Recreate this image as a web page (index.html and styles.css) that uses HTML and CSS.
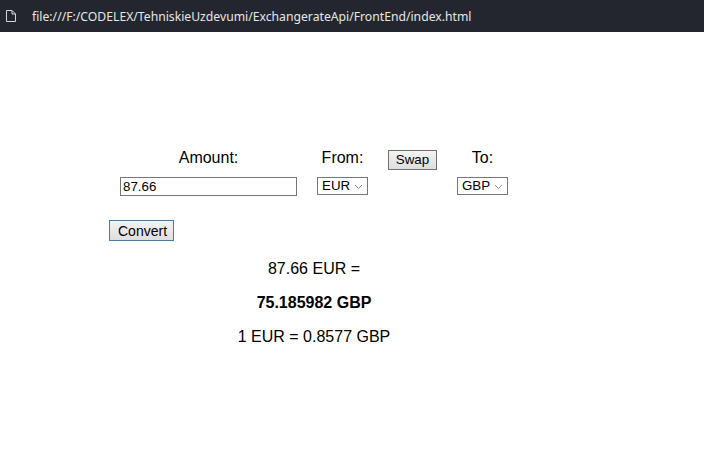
FILE: index.html
```html
<!DOCTYPE html>
<html lang="en">
<head>
<meta charset="utf-8">
<title>Exchange rate</title>
<link rel="stylesheet" href="styles.css">
</head>
<body>
<header class="topbar">
  <svg class="file-icon" width="12" height="14" viewBox="0 0 12 14" aria-hidden="true">
    <path d="M1.5 1.5 H7 L10.5 5 V12.5 H1.5 Z M7 1.5 V5 H10.5" fill="none" stroke="#d6d6d6" stroke-width="1"/>
  </svg>
  <span class="url">file:///F:/CODELEX/TehniskieUzdevumi/ExchangerateApi/FrontEnd/index.html</span>
</header>
<main class="page">
  <div class="form">
    <label class="lbl" for="amount">Amount:</label>
    <label class="lbl" for="from">From:</label>
    <button class="btn btn-swap" type="button">Swap</button>
    <label class="lbl" for="to">To:</label>

    <input id="amount" class="amount" type="text" value="87.66">
    <span class="sel-wrap">
      <select id="from" class="sel"><option>EUR</option></select>
      <svg class="chev" width="9" height="6" viewBox="0 0 9 6" aria-hidden="true"><path d="M1 1 L4.5 4.5 L8 1" fill="none" stroke="#8a8a8a" stroke-width="1"/></svg>
    </span>
    <span></span>
    <span class="sel-wrap">
      <select id="to" class="sel"><option>GBP</option></select>
      <svg class="chev" width="9" height="6" viewBox="0 0 9 6" aria-hidden="true"><path d="M1 1 L4.5 4.5 L8 1" fill="none" stroke="#8a8a8a" stroke-width="1"/></svg>
    </span>
  </div>
  <div class="actions">
    <button class="btn btn-convert" type="button">Convert</button>
  </div>
  <div class="results">
    <p>87.66 EUR =</p>
    <p class="strong">75.185982 GBP</p>
    <p>1 EUR = 0.8577 GBP</p>
  </div>
</main>
</body>
</html>
```
FILE: styles.css
```css
html, body {
  margin: 0;
  padding: 0;
  background: #ffffff;
}
body {
  font-family: "Liberation Sans", Arial, sans-serif;
  color: #000;
}
.topbar {
  height: 32px;
  background: #23262e;
  display: flex;
  align-items: center;
  padding-left: 5px;
  box-sizing: border-box;
}
.file-icon {
  display: block;
  margin-top: -1px;
}
.url {
  margin-left: 15px;
  font-family: "Noto Sans", "Open Sans", sans-serif;
  font-size: 12.2px;
  color: #e6e6e6;
  white-space: nowrap;
}
.page {
  padding-top: 117px;
}
.form {
  display: grid;
  grid-template-columns: 185px 83px 57px 83px;
  grid-template-rows: 21px auto;
  row-gap: 7px;
  margin-left: 116px;
  justify-items: center;
  align-items: start;
}
.lbl {
  font-size: 16px;
  line-height: 18px;
}
.btn {
  font-family: "Liberation Sans", Arial, sans-serif;
  font-size: 13.33px;
  color: #000;
  background: linear-gradient(#f3f3f3, #dedede);
  border: 1px solid #707070;
  border-radius: 0;
  padding: 0 6px;
  height: 20px;
  line-height: 18px;
}
.btn-swap {
  margin-top: 1px;
  width: 49px;
}
.amount {
  width: 177px;
  height: 19px;
  box-sizing: border-box;
  border: 1px solid #767676;
  padding: 0 2px;
  font-family: "Liberation Sans", Arial, sans-serif;
  font-size: 13.33px;
  margin: 0;
}
.sel-wrap {
  position: relative;
  display: block;
  width: 51px;
  height: 18px;
}
.sel {
  -webkit-appearance: none;
  appearance: none;
  display: block;
  width: 51px;
  height: 18px;
  box-sizing: border-box;
  border: 1px solid #767676;
  border-radius: 0;
  background: #fff;
  color: #000;
  font-family: "Liberation Sans", Arial, sans-serif;
  font-size: 13.33px;
  line-height: 16px;
  padding: 0 0 0 4px;
  margin: 0;
}
.chev {
  position: absolute;
  right: 5px;
  top: 7px;
  pointer-events: none;
}
.actions {
  margin-top: 24px;
  margin-left: 109px;
}
.btn-convert {
  height: 21px;
  width: 65px;
  padding: 0 8px;
  border-color: #3c7fb1;
  font-size: 14px;
}
.results {
  width: 410px;
  margin-left: 109px;
  padding-top: 19px;
  display: flex;
  flex-direction: column;
  align-items: center;
  gap: 16px;
}
.results p {
  margin: 0;
  font-size: 16px;
  line-height: 18px;
}
.results .strong {
  font-weight: bold;
}
```
